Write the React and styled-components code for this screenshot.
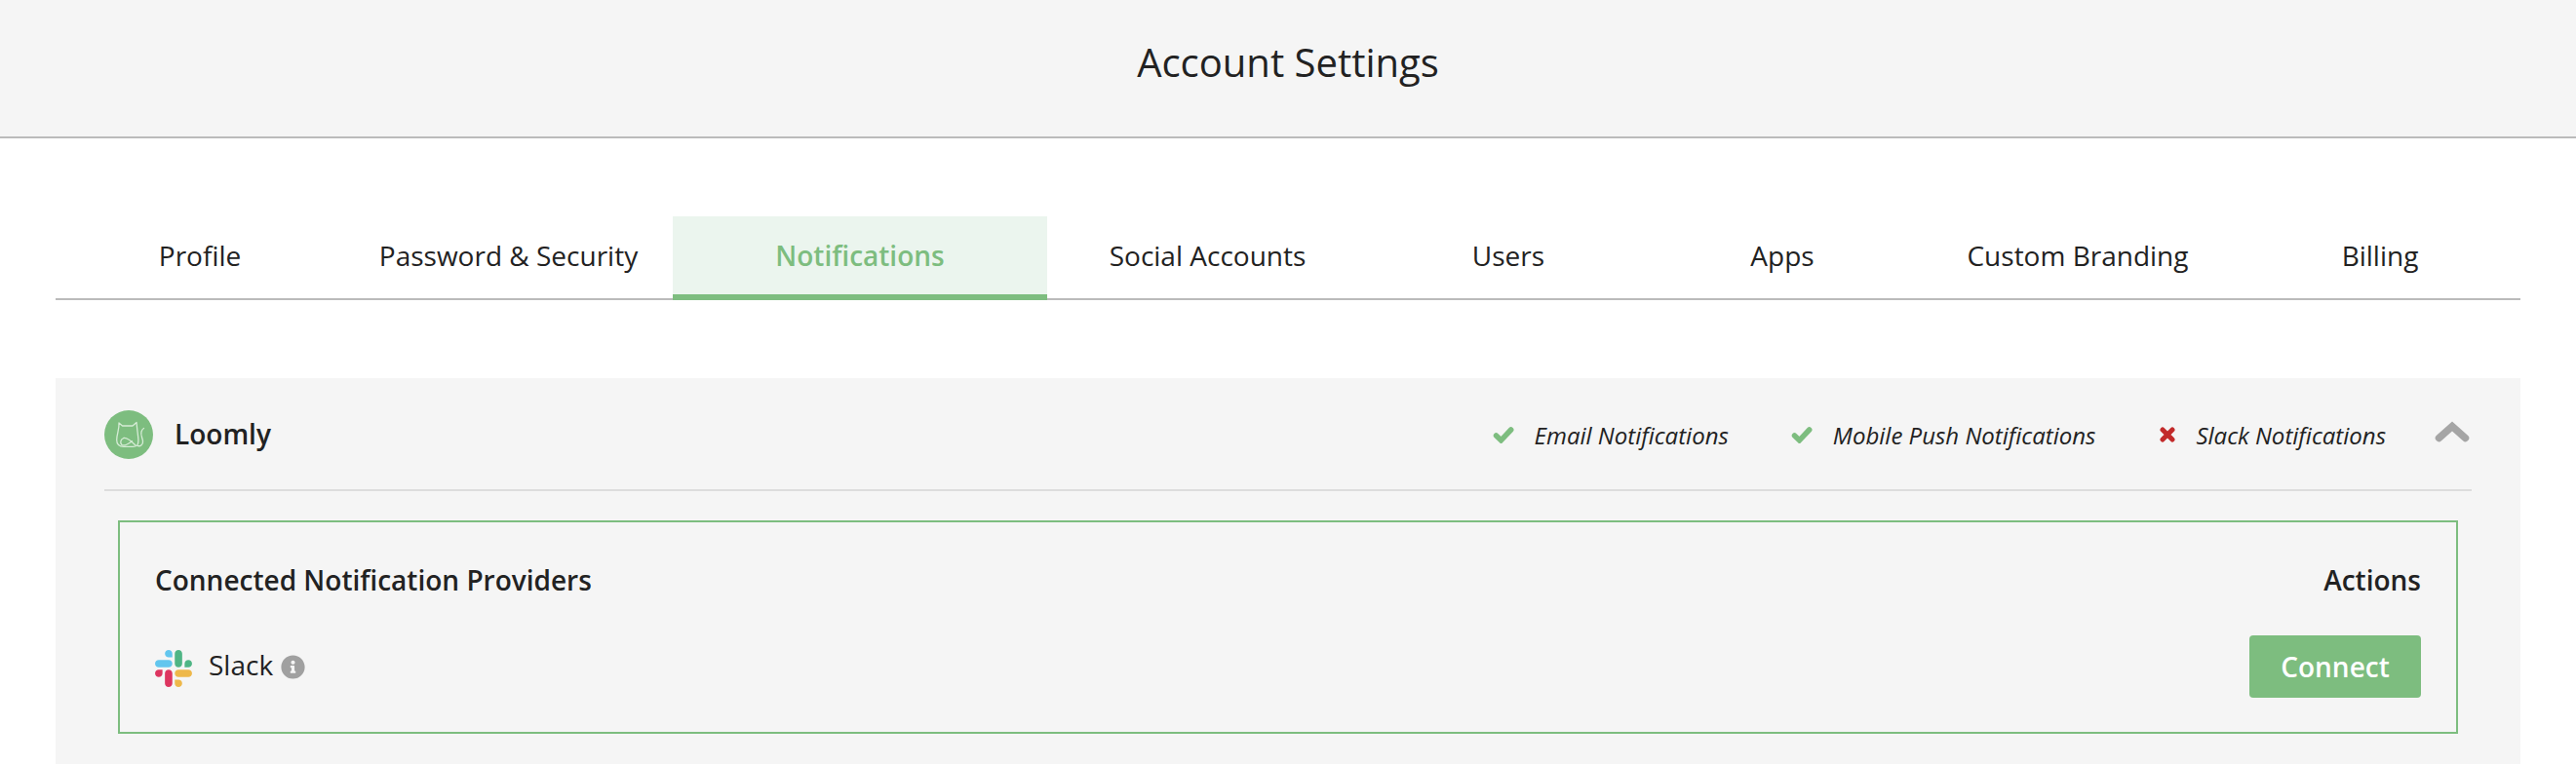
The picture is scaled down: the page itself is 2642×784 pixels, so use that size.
import React from "react";
import styled, { createGlobalStyle } from "styled-components";
import { FaInfoCircle } from "react-icons/fa";

const GlobalStyle = createGlobalStyle`
  html, body {
    margin: 0;
    background: #fff;
    overflow: hidden;
  }
  body {
    font-family: "Open Sans", "Noto Sans", sans-serif;
    color: #222;
  }
`;

const TABS = [
  { label: "Profile", width: 296 },
  { label: "Password & Security", width: 337 },
  { label: "Notifications", width: 384, active: true },
  { label: "Social Accounts", width: 329 },
  { label: "Users", width: 288 },
  { label: "Apps", width: 274 },
  { label: "Custom Branding", width: 332 },
  { label: "Billing", width: 288 },
];

const CHANNELS = [
  { label: "Email Notifications", on: true, gap: 64 },
  { label: "Mobile Push Notifications", on: true, gap: 66 },
  { label: "Slack Notifications", on: false, gap: 50 },
];

function CatLogo() {
  return (
    <LogoSvg viewBox="0 0 50 50">
      <circle cx="25" cy="25" r="25" fill="#7dbd7f" />
      <g fill="none" stroke="#d6ecd6" strokeWidth="1.3" strokeLinecap="round" strokeLinejoin="round">
        <path d="M15 13L18.500 16H29L33 12.500C33.500 18 34 22 34.500 26C35 30 35.500 33 34 35.500C33 37 31 37.300 29 37.300H20C15 37.300 12.700 35 12.700 30.500C12.700 24 15.500 20 15 13Z" />
        <path d="M34 36.500C37 37.500 40 35 39.500 31.500C39 28 37 25 38 22C38.500 20.500 39.500 19 40.500 18.500" />
        <path d="M20 28.500C24 28 29 33 32 36" />
        <path d="M20 28.500C17 29.500 15.500 33 18 35.500C21 37.500 25 34 28.500 31.800" />
      </g>
    </LogoSvg>
  );
}

function SlackLogo() {
  return (
    <SlackSvg viewBox="0 0 2447.6 2452.5">
      <path fill="#62c6ee" d="m897.4 0c-135.3.1-244.8 109.9-244.7 245.2-.1 135.3 109.5 245.1 244.8 245.2h244.8v-245.1c.1-135.3-109.5-245.1-244.9-245.3.1 0 .1 0 0 0m0 654h-652.6c-135.3.1-244.9 109.9-244.8 245.2-.2 135.3 109.4 245.1 244.7 245.3h652.7c135.3-.1 244.9-109.9 244.8-245.2.1-135.4-109.5-245.2-244.8-245.3z" />
      <path fill="#4fb585" d="m2447.6 899.2c.1-135.3-109.5-245.1-244.8-245.2-135.3.1-244.9 109.9-244.8 245.2v245.3h244.8c135.3-.1 244.9-109.9 244.8-245.3zm-652.7 0v-654c.1-135.2-109.4-245-244.7-245.2-135.3.1-244.9 109.9-244.8 245.2v654c-.2 135.3 109.4 245.1 244.7 245.3 135.3-.1 244.9-109.9 244.8-245.3z" />
      <path fill="#eeb84a" d="m1550.1 2452.5c135.3-.1 244.9-109.9 244.8-245.2.1-135.3-109.5-245.1-244.8-245.2h-244.8v245.2c-.1 135.2 109.5 245 244.8 245.2zm0-654.1h652.7c135.3-.1 244.9-109.9 244.8-245.2.2-135.3-109.4-245.1-244.7-245.3h-652.7c-135.3.1-244.9 109.9-244.8 245.2-.1 135.4 109.4 245.2 244.7 245.3z" />
      <path fill="#dd3560" d="m0 1553.2c-.1 135.3 109.500 245.100 244.800 245.200 135.300-.1 244.900-109.900 244.800-245.200v-245.200h-244.800c-135.300.1-244.900 109.900-244.800 245.200zm652.700 0v654c-.2 135.300 109.400 245.100 244.700 245.300 135.300-.1 244.900-109.900 244.800-245.200v-653.900c.2-135.300-109.400-245.100-244.700-245.300-135.400 0-244.800 109.800-244.800 245.100 0 0 0 .1 0 0" />
    </SlackSvg>
  );
}

function CheckMark() {
  return (
    <svg width="22" height="17" viewBox="0 0 22 17" style={{ display: "block" }}>
      <polyline points="3.500,9 8.500,13.800 18.700,3" fill="none" stroke="#7dbd7f" strokeWidth="5.500" strokeLinecap="round" />
    </svg>
  );
}

function CrossMark() {
  return (
    <svg width="16" height="16" viewBox="0 0 16 16" style={{ display: "block" }}>
      <path d="M3 3L13 13M13 3L3 13" fill="none" stroke="#c22a2a" strokeWidth="5" strokeLinecap="round" />
    </svg>
  );
}

function ChevronUp() {
  return (
    <svg width="36" height="22" viewBox="0 0 36 22" style={{ display: "block" }}>
      <polyline points="4.500,17.500 18,5.500 31.500,17.500" fill="none" stroke="#a5a5a5" strokeWidth="7.500" strokeLinecap="round" />
    </svg>
  );
}

export default function App() {
  return (
    <>
      <GlobalStyle />
      <TopBar>
        <PageTitle>Account Settings</PageTitle>
      </TopBar>
      <Content>
        <TabBar>
          {TABS.map((tab) => (
            <Tab key={tab.label} $width={tab.width} $active={tab.active}>
              {tab.label}
            </Tab>
          ))}
        </TabBar>
        <Panel>
          <PanelHeader>
            <Brand>
              <CatLogo />
              <BrandName>Loomly</BrandName>
            </Brand>
            <Channels>
              {CHANNELS.map((channel) => (
                <Channel key={channel.label} $gap={channel.gap}>
                  {channel.on ? <CheckMark /> : <CrossMark />}
                  <ChannelLabel>{channel.label}</ChannelLabel>
                </Channel>
              ))}
              <Collapse>
                <ChevronUp />
              </Collapse>
            </Channels>
          </PanelHeader>
          <ProvidersBox>
            <ProvidersRow>
              <ColumnTitle>Connected Notification Providers</ColumnTitle>
              <ColumnTitle>Actions</ColumnTitle>
            </ProvidersRow>
            <ProvidersRow>
              <Provider>
                <SlackLogo />
                <ProviderName>Slack</ProviderName>
                <InfoIcon>
                  <FaInfoCircle />
                </InfoIcon>
              </Provider>
              <ConnectButton>Connect</ConnectButton>
            </ProvidersRow>
          </ProvidersBox>
        </Panel>
      </Content>
    </>
  );
}

const TopBar = styled.header`
  height: 140px;
  background: #f5f5f5;
  border-bottom: 2px solid #bbb;
  display: flex;
  align-items: center;
  justify-content: center;
`;

const PageTitle = styled.h1`
  margin: 0 0 13px;
  font-size: 40px;
  font-weight: 400;
  line-height: 54px;
  color: #222;
`;

const Content = styled.main`
  padding: 80px 57px 0;
`;

const TabBar = styled.nav`
  display: flex;
  height: 86px;
  box-sizing: border-box;
  border-bottom: 2px solid #bbb;
`;

const Tab = styled.div`
  box-sizing: border-box;
  width: ${(p) => p.$width}px;
  height: 86px;
  flex: none;
  display: flex;
  align-items: center;
  justify-content: center;
  font-size: 28px;
  font-weight: ${(p) => (p.$active ? 600 : 400)};
  color: ${(p) => (p.$active ? "#7dbd7f" : "#222")};
  background: ${(p) => (p.$active ? "#ebf5ee" : "transparent")};
  border-bottom: 6px solid ${(p) => (p.$active ? "#7dbd7f" : "transparent")};
`;

const Panel = styled.section`
  margin-top: 80px;
  background: #f5f5f5;
  padding: 0 50px 31px;
`;

const PanelHeader = styled.div`
  display: flex;
  align-items: center;
  justify-content: space-between;
  height: 116px;
  box-sizing: border-box;
  padding-top: 2px;
  border-bottom: 2px solid #ddd;
`;

const Brand = styled.div`
  display: flex;
  align-items: center;
  gap: 22px;
`;

const LogoSvg = styled.svg`
  width: 50px;
  height: 50px;
  display: block;
`;

const BrandName = styled.span`
  font-size: 28px;
  font-weight: 600;
  margin-bottom: 2px;
`;

const Channels = styled.div`
  display: flex;
  align-items: center;
`;

const Channel = styled.div`
  display: flex;
  align-items: center;
  gap: 21px;
  margin-right: ${(p) => p.$gap}px;
`;

const ChannelLabel = styled.span`
  font-size: 24px;
  font-style: italic;
  color: #222;
`;

const Collapse = styled.span`
  display: flex;
  margin: 0 2px 6px 0;
`;

const ProvidersBox = styled.div`
  margin: 30px 14px 0;
  border: 2px solid #7dbd7f;
  padding: 41px 36px 35px;
  display: flex;
  flex-direction: column;
  gap: 39px;
`;

const ProvidersRow = styled.div`
  display: flex;
  align-items: center;
  justify-content: space-between;
`;

const ColumnTitle = styled.div`
  font-size: 28px;
  font-weight: 600;
  line-height: 36px;
`;

const Provider = styled.div`
  display: flex;
  align-items: center;
`;

const SlackSvg = styled.svg`
  width: 38px;
  height: 38px;
  display: block;
  margin: 4px 17px 0 0;
`;

const ProviderName = styled.span`
  font-size: 28px;
  margin-bottom: 4px;
`;

const InfoIcon = styled.span`
  display: flex;
  font-size: 25px;
  color: #a0a0a0;
  margin-left: 8px;
`;

const ConnectButton = styled.button`
  width: 176px;
  height: 64px;
  border: none;
  border-radius: 4px;
  background: #7dbd7f;
  color: #fff;
  font-family: inherit;
  font-size: 28px;
  font-weight: 600;
  padding: 0;
`;
